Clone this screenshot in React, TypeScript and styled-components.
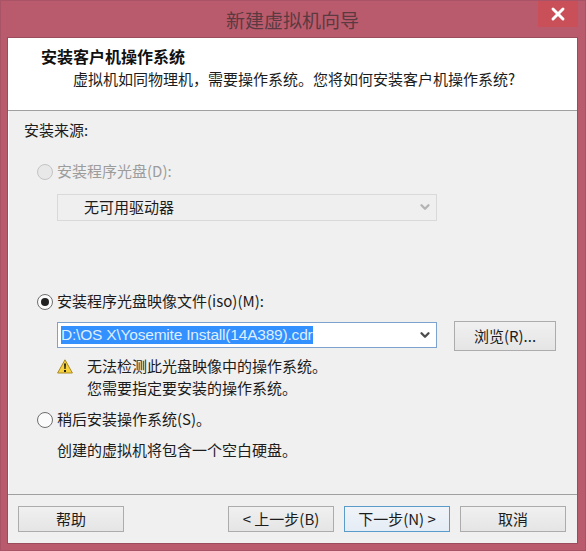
import styled, { createGlobalStyle } from "styled-components";
import { FiChevronDown, FiX } from "react-icons/fi";

const GlobalStyle = createGlobalStyle`
  html, body {
    margin: 0;
    padding: 0;
    background: #b95a6c;
  }
  body {
    font-family: "Noto Sans CJK SC", "Liberation Sans", sans-serif;
    font-size: 15px;
    color: #1c1c1c;
  }
`;

const Frame = styled.div`
  width: 586px;
  height: 551px;
  box-sizing: border-box;
  padding: 0 7px 6px 6px;
  display: flex;
  flex-direction: column;
  background: #ba5b6d;
  border: 1px solid #a85466;
  position: relative;
`;

const TitleBar = styled.div`
  height: 36px;
  flex: none;
  display: flex;
  align-items: center;
  justify-content: center;
  font-size: 19px;
  color: #5a3a40;
`;

const CloseButton = styled.div`
  position: absolute;
  top: 0;
  right: 7px;
  width: 40px;
  height: 26px;
  background: #c94f58;
  color: #fff;
  display: flex;
  align-items: center;
  justify-content: center;
  font-size: 20px;
`;

const Client = styled.div`
  flex: 1;
  display: flex;
  flex-direction: column;
  background: #f0f0f0;
  border: 1px solid #9a4c5c;
  min-height: 0;
`;

const Header = styled.div`
  height: 73px;
  flex: none;
  box-sizing: border-box;
  background: #fff;
  border-bottom: 1px solid #a0a0a0;
  padding: 7px 0 0 33px;
  line-height: 22px;
`;

const HeaderTitle = styled.div`
  font-weight: 700;
  font-size: 16px;
  color: #111;
`;

const HeaderText = styled.div`
  margin: 1px 0 0 32px;
`;

const Body = styled.div`
  flex: 1;
  display: flex;
  flex-direction: column;
  padding: 9px 0 0 15px;
  border-left: 1px solid #fff;
`;

const SourceLabel = styled.div`
  line-height: 20px;
`;

const RadioRow = styled.div<{ $top: number; $disabled?: boolean }>`
  display: flex;
  align-items: center;
  gap: 4px;
  margin: ${(p) => p.$top}px 0 0 13px;
  height: 20px;
  color: ${(p) => (p.$disabled ? "#9c9c9c" : "#1c1c1c")};
`;

const RadioLabel = styled.span`
  margin-bottom: 3px;
`;

const RadioCircle = styled.span<{ $disabled?: boolean }>`
  width: 16px;
  height: 16px;
  box-sizing: border-box;
  border-radius: 50%;
  border: 1px solid ${(p) => (p.$disabled ? "#c4c4c4" : "#6e6e6e")};
  background: ${(p) => (p.$disabled ? "#e8e8e8" : "#fbfbfb")};
  display: flex;
  align-items: center;
  justify-content: center;
  flex: none;
`;

const RadioDot = styled.span`
  width: 8px;
  height: 8px;
  border-radius: 50%;
  background: #222;
`;

const Indented = styled.div`
  margin-left: 33px;
`;

const DisabledSelect = styled(Indented)`
  width: 380px;
  height: 27px;
  box-sizing: border-box;
  margin-top: 12px;
  border: 1px solid #d9d9d9;
  background: #efefef;
  display: flex;
  align-items: center;
  justify-content: space-between;
  padding: 0 3px 2px 26px;
  color: #1c1c1c;
`;

const ComboRow = styled(Indented)`
  display: flex;
  align-items: flex-start;
  gap: 17px;
  margin-top: 9px;
`;

const ComboBox = styled.div`
  width: 380px;
  height: 26px;
  margin-top: 1px;
  box-sizing: border-box;
  border: 1px solid #7da2ce;
  background: #fff;
  display: flex;
  align-items: center;
  justify-content: space-between;
  padding: 0 3px 0 3px;
`;

const Selection = styled.span`
  background: #3390ff;
  color: #dfeeff;
  font-family: "Liberation Sans", sans-serif;
  font-size: 15.5px;
  line-height: 18px;
  letter-spacing: -0.2px;
`;

const Caret = styled(FiChevronDown)<{ $muted?: boolean }>`
  color: ${(p) => (p.$muted ? "#b4b4b4" : "#4d4d4d")};
  stroke-width: 4;
  font-size: 14px;
  margin-right: 1px;
`;

const Button = styled.div<{ $default?: boolean }>`
  width: 106px;
  height: 26px;
  box-sizing: border-box;
  flex: none;
  padding-bottom: 2px;
  border: 1px solid ${(p) => (p.$default ? "#5b9bc9" : "#acacac")};
  background: ${(p) =>
    p.$default ? "linear-gradient(#f0f4f9, #e4ecf5)" : "linear-gradient(#f0f0f0, #e5e5e5)"};
  display: flex;
  align-items: center;
  justify-content: center;
  color: #1c1c1c;
`;

const BrowseButton = styled(Button)`
  height: 30px;
  width: 102px;
`;

const Notice = styled(Indented)`
  display: flex;
  margin-top: 4px;
  line-height: 21.5px;
`;

const NoticeIcon = styled.svg`
  width: 16px;
  height: 15px;
  flex: none;
  margin: 4px 14px 0 0;
`;

const Hint = styled(Indented)`
  margin-top: 10px;
  line-height: 20px;
`;

const Footer = styled.div`
  margin-top: auto;
  height: 49px;
  flex: none;
  box-sizing: border-box;
  border-top: 1px solid #a0a0a0;
  padding: 11px 11px 0 10px;
  display: flex;
  gap: 10px;
`;

const HelpButton = styled(Button)`
  margin-right: 94px;
`;

export default function App() {
  return (
    <>
      <GlobalStyle />
      <Frame>
        <TitleBar>新建虚拟机向导</TitleBar>
        <CloseButton>
          <FiX strokeWidth={3.5} />
        </CloseButton>
        <Client>
          <Header>
            <HeaderTitle>安装客户机操作系统</HeaderTitle>
            <HeaderText>虚拟机如同物理机，需要操作系统。您将如何安装客户机操作系统?</HeaderText>
          </Header>
          <Body>
            <SourceLabel>安装来源:</SourceLabel>
            <RadioRow $top={22} $disabled>
              <RadioCircle $disabled />
              <RadioLabel>安装程序光盘(D):</RadioLabel>
            </RadioRow>
            <DisabledSelect>
              无可用驱动器
              <Caret $muted />
            </DisabledSelect>
            <RadioRow $top={71}>
              <RadioCircle>
                <RadioDot />
              </RadioCircle>
              <RadioLabel>安装程序光盘映像文件(iso)(M):</RadioLabel>
            </RadioRow>
            <ComboRow>
              <ComboBox>
                <Selection>D:\OS X\Yosemite Install(14A389).cdr</Selection>
                <Caret />
              </ComboBox>
              <BrowseButton>浏览(R)...</BrowseButton>
            </ComboRow>
            <Notice>
              <NoticeIcon viewBox="0 0 16 15">
                <path d="M8 .8 15.4 14H.6Z" fill="#f7d23c" stroke="#a88a24" strokeWidth="1" />
                <path d="M7 4.5h2L8.6 10H7.4Z" fill="#222" />
                <rect x="7" y="11" width="2" height="2" fill="#222" />
              </NoticeIcon>
              <div>
                无法检测此光盘映像中的操作系统。
                <br />
                您需要指定要安装的操作系统。
              </div>
            </Notice>
            <RadioRow $top={12}>
              <RadioCircle />
              <RadioLabel>稍后安装操作系统(S)。</RadioLabel>
            </RadioRow>
            <Hint>创建的虚拟机将包含一个空白硬盘。</Hint>
          </Body>
          <Footer>
            <HelpButton>帮助</HelpButton>
            <Button>&lt; 上一步(B)</Button>
            <Button $default>下一步(N) &gt;</Button>
            <Button>取消</Button>
          </Footer>
        </Client>
      </Frame>
    </>
  );
}
